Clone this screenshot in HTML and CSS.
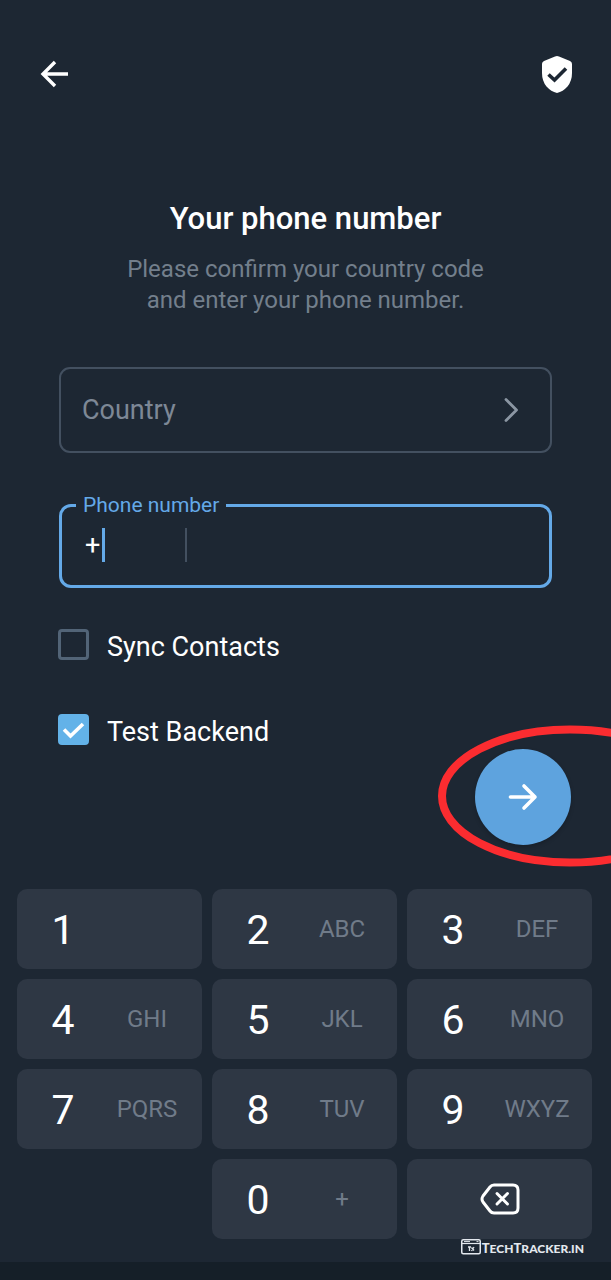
FILE: index.html
```
<!DOCTYPE html>
<html lang="en">
<head>
<meta charset="utf-8">
<meta name="viewport" content="width=device-width, initial-scale=1">
<title>Your phone number</title>
<link rel="stylesheet" href="styles.css">
</head>
<body>
<div class="screen">
  <header class="topbar">
    <button class="icon-button" type="button" aria-label="Back">
      <svg width="30" height="32" viewBox="0 0 30 32" fill="none" stroke="#fff" stroke-width="3.4"><path d="M29 16H4M16 4L4 16L16 28"/></svg>
    </button>
    <button class="icon-button" type="button" aria-label="Proxy settings">
      <svg width="32" height="40" viewBox="0 0 32 40"><path fill="#fff" d="M16 2Q17 2 18 2.500L29 7Q31 8 31 10V19Q31 27 26.500 32.500Q22 37.500 16 39Q10 37.500 5.500 32.500Q1 27 1 19V10Q1 8 3 7L14 2.500Q15 2 16 2Z"/><path d="M7.500 20.500L13.500 26L25 14.500" fill="none" stroke="#1d2733" stroke-width="3.600"/></svg>
    </button>
  </header>

  <main class="content">
    <h1 class="title">Your phone number</h1>
    <p class="hint">Please confirm your country code<br>and enter your phone number.</p>

    <form class="form">
      <button class="country" type="button">
        <span>Country</span>
        <svg width="16" height="26" viewBox="0 0 16 26" fill="none" stroke="#8b96a3" stroke-width="2.800" stroke-linecap="round" stroke-linejoin="round"><path d="M3 2.500L13.500 13L3 23.500"/></svg>
      </button>

      <fieldset class="phone">
        <legend class="phone-legend"><label for="number">Phone number</label></legend>
        <div class="phone-row">
          <label class="code">
            <input class="code-input" type="text" value="+" aria-label="Country code">
            <span class="caret"></span>
          </label>
          <input class="number-input" id="number" type="tel">
        </div>
      </fieldset>

      <div class="options">
        <label class="option">
          <span class="box"><input class="check" type="checkbox"><svg class="tick" viewBox="0 0 31 31"><path d="M6 15.500L12.500 22L25 10"/></svg></span>
          <span class="option-text">Sync Contacts</span>
        </label>
        <label class="option">
          <span class="box"><input class="check" type="checkbox" checked><svg class="tick" viewBox="0 0 31 31"><path d="M6 15.500L12.500 22L25 10"/></svg></span>
          <span class="option-text">Test Backend</span>
        </label>
      </div>

      <div class="actions">
        <button class="next" type="submit" aria-label="Next">
          <svg width="30" height="28" viewBox="0 0 30 28" fill="none" stroke="#fff" stroke-width="3.600" stroke-linecap="round" stroke-linejoin="round"><path d="M2.500 14H27M16 3L27 14L16 25"/></svg>
        </button>
        <svg class="highlight" width="264" height="142" viewBox="0 0 264 142"><ellipse cx="132" cy="71" rx="128" ry="66.500" fill="none" stroke="#fb2c30" stroke-width="8"/></svg>
      </div>
    </form>
  </main>

  <section class="keypad" aria-label="Keypad">
    <button class="key" type="button"><span class="digit">1</span></button>
    <button class="key" type="button"><span class="digit">2</span><span class="letters">ABC</span></button>
    <button class="key" type="button"><span class="digit">3</span><span class="letters">DEF</span></button>
    <button class="key" type="button"><span class="digit">4</span><span class="letters">GHI</span></button>
    <button class="key" type="button"><span class="digit">5</span><span class="letters">JKL</span></button>
    <button class="key" type="button"><span class="digit">6</span><span class="letters">MNO</span></button>
    <button class="key" type="button"><span class="digit">7</span><span class="letters">PQRS</span></button>
    <button class="key" type="button"><span class="digit">8</span><span class="letters">TUV</span></button>
    <button class="key" type="button"><span class="digit">9</span><span class="letters">WXYZ</span></button>
    <button class="key key-zero" type="button"><span class="digit">0</span><span class="letters">+</span></button>
    <button class="key key-erase" type="button" aria-label="Delete">
      <svg width="40" height="32" viewBox="0 0 40 32" fill="none" stroke="#fff" stroke-width="3" stroke-linejoin="round" stroke-linecap="round"><path d="M14 2H33Q38 2 38 7V25Q38 30 33 30H14Q11.500 30 10 28L3 19Q1 16 3 13L10 4Q11.500 2 14 2Z"/><path d="M17 10.500L27.500 21M27.500 10.500L17 21"/></svg>
    </button>
  </section>

  <div class="credit">
    <svg width="20" height="16" viewBox="0 0 20 16" fill="none" stroke="#e3e8ee"><rect x=".75" y=".75" width="18.500" height="14" rx="1.500" stroke-width="1.500"/><path d="M1 4.500H19" stroke-width="1.200"/><path d="M3 2.600H9M15.500 2.600H17.500" stroke-width="1"/><path d="M7 8H10M8.500 8V12M10.500 8.500L13 11.500M13 8L10.500 12" stroke-width="1.300"/></svg>
    <span class="credit-name"><span class="cap">T</span>ech<span class="cap">T</span>racker.in</span>
  </div>
  <div class="navbar"></div>
</div>
</body>
</html>
```

FILE: styles.css
```
* { box-sizing: border-box; }

body {
  margin: 0;
  background: #1d2733;
  color: #fff;
  font-family: Roboto, "Noto Sans", sans-serif;
}

button, input {
  font: inherit;
  color: inherit;
  border: 0;
  padding: 0;
  background: none;
}

svg { display: block; }

.screen {
  display: flex;
  flex-direction: column;
  min-height: 100vh;
  overflow: hidden;
}

.topbar {
  display: flex;
  justify-content: space-between;
  align-items: center;
  padding: 54px 38px 0 39px;
}

.content { padding: 105px 59px 0; }

.title {
  margin: 0;
  text-align: center;
  font-size: 31px;
  line-height: 40px;
  font-weight: 500;
}

.hint {
  margin: 15px 0 0;
  text-align: center;
  font-size: 24px;
  line-height: 31px;
  color: #737f8c;
}

.form { margin-top: 51px; }

.country {
  display: flex;
  justify-content: space-between;
  align-items: center;
  width: 100%;
  height: 86px;
  padding: 0 31px 0 21px;
  border: 2px solid #435060;
  border-radius: 11px;
  font-size: 27px;
  color: #7d8896;
}

.phone {
  margin: 40px 0 0;
  min-width: 0;
  padding: 0 24px 23px 14px;
  border: 3px solid #64a9e8;
  border-radius: 12px;
}

.phone-legend {
  padding: 0 7px;
  font-size: 21px;
  line-height: 24px;
  color: #64a9e8;
}

.phone-row {
  display: flex;
  padding: 11px 0 0 9px;
}

.code {
  display: flex;
  align-items: center;
  width: 102px;
  border-right: 2px solid #435060;
}

.code-input {
  width: 17px;
  font-size: 27px;
  outline: 0;
}

.caret {
  width: 3px;
  height: 34px;
  background: #64a9e8;
}

.number-input {
  flex: 1;
  min-width: 0;
  height: 34px;
  padding-left: 16px;
  font-size: 27px;
  outline: 0;
}

.options {
  display: grid;
  gap: 48px;
  justify-items: start;
  margin: 38px 0 0 -1px;
}

.option {
  display: flex;
  align-items: flex-start;
  gap: 18px;
  font-size: 27px;
  line-height: 32px;
}

.option-text { padding-top: 5px; }

.box {
  display: grid;
  width: 31px;
  height: 31px;
  margin-top: 3px;
}

.check {
  grid-area: 1 / 1;
  appearance: none;
  margin: 0;
  border: 3px solid #526477;
  border-radius: 4px;
}

.check:checked {
  border-color: #63b2e8;
  background: #63b2e8;
}

.tick {
  grid-area: 1 / 1;
  visibility: hidden;
  pointer-events: none;
  fill: none;
  stroke: #fff;
  stroke-width: 3.6;
}

.check:checked + .tick {
  position: relative;
  visibility: visible;
}

.actions {
  position: relative;
  width: 96px;
  margin: 1px -19px 0 auto;
}

.next {
  display: grid;
  place-items: center;
  width: 96px;
  height: 96px;
  border-radius: 50%;
  background: #5ea3de;
  box-shadow: 0 2px 4px rgba(0, 0, 0, .2);
}

.highlight {
  position: absolute;
  top: -24px;
  left: -37px;
  pointer-events: none;
}

.keypad {
  display: grid;
  grid-template-columns: repeat(3, 1fr);
  gap: 10px;
  margin-top: auto;
  padding: 42px 19px 0 17px;
}

.key {
  display: grid;
  grid-template-columns: 92fr 76fr 17fr;
  align-items: center;
  justify-items: center;
  height: 80px;
  border-radius: 10px;
  background: #2e3744;
}

.key-zero { grid-column: 2; }

.key-erase { grid-template-columns: 1fr; }

.digit {
  padding-top: 2px;
  font-size: 41px;
}

.letters {
  font-size: 24px;
  color: #707b89;
}

.credit {
  display: flex;
  justify-content: flex-end;
  gap: 1px;
  height: 23px;
  padding-right: 27px;
  color: #e3e8ee;
}

.credit-name {
  font: 900 12px/18px Lato, sans-serif;
  text-transform: uppercase;
}

.cap { font-size: 13px; }

.navbar {
  height: 18px;
  background: #151f28;
}
```
